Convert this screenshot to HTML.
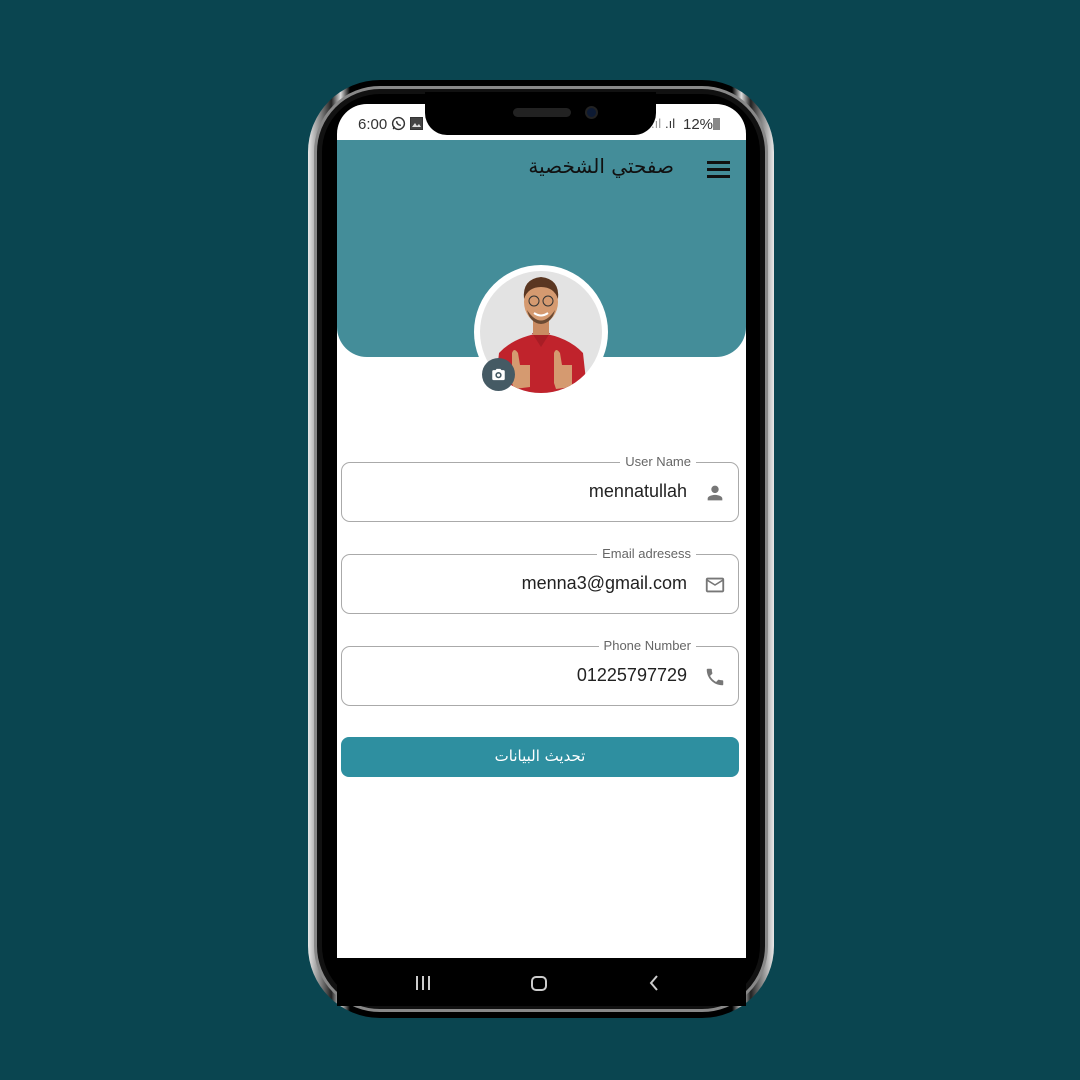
<!DOCTYPE html>
<html><head><meta charset="utf-8">
<style>
*{margin:0;padding:0;box-sizing:border-box}
body{width:1080px;height:1080px;background:#0a4550;position:relative;overflow:hidden;font-family:"Liberation Sans","Noto Sans CJK SC",sans-serif}
.frame{position:absolute;left:308px;top:80px;width:466px;height:938px;border-radius:72px;background:linear-gradient(90deg,#e8e8e8,#777 3%,#222 5%,#ddd 7%,#000 9%,#000 91%,#ddd 93%,#222 95%,#777 97%,#e8e8e8);}
.frame2{position:absolute;left:314px;top:86px;width:454px;height:926px;border-radius:66px;background:#111;border:3px solid #888}
.inner{position:absolute;left:322px;top:94px;width:438px;height:910px;border-radius:58px;background:#000}
.screen{position:absolute;left:337px;top:104px;width:409px;height:854px;background:#fff;border-radius:30px 30px 0 0;overflow:hidden}
.notch{position:absolute;left:425px;top:92px;width:231px;height:43px;background:#000;border-radius:0 0 22px 22px}
.spk{position:absolute;left:513px;top:108px;width:58px;height:9px;border-radius:5px;background:#222}
.cam{position:absolute;left:585px;top:106px;width:13px;height:13px;border-radius:50%;background:#0d1a33;border:2px solid #222}
.status{position:absolute;left:0;top:0;width:409px;height:36px;font-size:15px;color:#333}
.hdr{position:absolute;left:0;top:36px;width:409px;height:217px;background:#448d99;border-radius:0 0 30px 30px}
.title{position:absolute;right:72px;top:14px;font-size:20px;color:#111;font-family:"DejaVu Sans",sans-serif}
.menu{position:absolute;left:370px;top:21px;width:23px}
.menu i{display:block;height:3px;background:#111;margin-bottom:4px}
.field{position:absolute;left:4px;width:398px;height:60px;border:1.3px solid #aaa;border-radius:9px}
.lab{position:absolute;right:42px;top:-9px;background:#fff;padding:0 5px;font-size:13px;color:#666}
.val{position:absolute;right:51px;top:18px;font-size:18px;color:#222}
.ico{position:absolute;right:12px;top:19px;width:22px;height:22px}
.btn{position:absolute;left:4px;top:633px;width:398px;height:40px;border-radius:8px;background:#2e8fa0;color:#fff;text-align:center;line-height:38px;font-size:15px;font-family:"DejaVu Sans",sans-serif}
.nav{position:absolute;left:337px;top:958px;width:409px;height:48px;background:#000}
</style></head><body>
<div class="frame"></div><div class="frame2"></div><div class="inner"></div>
<div class="screen">
 <div class="status">
  <span style="position:absolute;left:21px;top:12px">6:00</span>
  <svg style="position:absolute;left:54px;top:12px" width="15" height="15" viewBox="0 0 16 16"><circle cx="8" cy="8" r="6.3" fill="none" stroke="#333" stroke-width="1.5"/><path d="M2.5 14l1-3" stroke="#333" stroke-width="1.5"/><path d="M6 5.5c0 2.5 2 4.5 4.5 4.5" stroke="#333" stroke-width="1.6" fill="none"/></svg>
  <svg style="position:absolute;left:73px;top:13px" width="13" height="13" viewBox="0 0 13 13"><rect x="0.5" y="0.5" width="12" height="12" fill="none" stroke="#333"/><rect x="1" y="1" width="11" height="11" fill="#444"/><path d="M2 10l3-4 2 3 2-2 2 3z" fill="#ddd"/></svg>
  <span style="position:absolute;left:314px;top:12px;font-size:13px;color:#999">.ıl</span>
  <span style="position:absolute;left:328px;top:12px;font-size:13px;color:#333">.ıl</span>
  <span style="position:absolute;left:346px;top:12px">12%</span>
  <span style="position:absolute;left:376px;top:14px;width:7px;height:12px;background:#888"></span>
 </div>
 <div class="hdr">
  <div class="title">صفحتي الشخصية</div>
  <div class="menu"><i></i><i></i><i></i></div>
 </div>
 <svg style="position:absolute;left:137px;top:161px" width="134" height="134" viewBox="0 0 134 134">
  <defs><clipPath id="c"><circle cx="67" cy="67" r="61"/></clipPath></defs>
  <circle cx="67" cy="67" r="67" fill="#fff"/>
  <circle cx="67" cy="67" r="61" fill="#e3e3e3"/>
  <g clip-path="url(#c)">
   <path d="M20 134 L25 88 Q40 72 67 68 Q94 72 109 88 L114 134Z" fill="#c0232c"/>
   <path d="M58 68 L67 82 L76 68Z" fill="#a81d25"/>
   <rect x="59" y="52" width="16" height="18" fill="#c98b62"/>
   <ellipse cx="67" cy="37" rx="17" ry="21" fill="#d59a70"/>
   <path d="M50 34 Q48 14 67 12 Q86 14 84 34 Q80 22 67 22 Q54 22 50 34Z" fill="#5a3621"/>
   <path d="M53 45 Q67 66 81 45 Q78 58 67 59 Q56 58 53 45Z" fill="#6b4a33"/>
   <circle cx="60" cy="36" r="5" fill="none" stroke="#333" stroke-width="1"/>
   <circle cx="74" cy="36" r="5" fill="none" stroke="#333" stroke-width="1"/>
   <path d="M60 48 Q67 53 74 48" stroke="#fff" stroke-width="2" fill="none"/>
   <path d="M38 118 L38 88 Q40 82 44 88 L46 100 L56 100 L56 122 L40 124Z" fill="#d59a70"/>
   <path d="M80 118 L80 88 Q82 82 86 88 L88 100 L98 100 L98 122 L82 124Z" fill="#d59a70"/>
  </g>
 </svg>
 <div style="position:absolute;left:145px;top:254px;width:33px;height:33px;border-radius:50%;background:#455a64"></div>
 <svg style="position:absolute;left:154px;top:263px" width="15" height="15" viewBox="0 0 24 24"><path fill="#fff" d="M9 3L7.2 5H4c-1.1 0-2 .9-2 2v12c0 1.1.9 2 2 2h16c1.1 0 2-.9 2-2V7c0-1.1-.9-2-2-2h-3.2L15 3H9zm3 15a5 5 0 110-10 5 5 0 010 10zm0-2.5a2.5 2.5 0 100-5 2.5 2.5 0 000 5z"/></svg>

 <div class="field" style="top:358px"><span class="lab">User Name</span><span class="val">mennatullah</span>
  <svg class="ico" viewBox="0 0 24 24"><path fill="#777" d="M12 12c2.2 0 4-1.8 4-4s-1.8-4-4-4-4 1.8-4 4 1.8 4 4 4zm0 2c-2.7 0-8 1.3-8 4v2h16v-2c0-2.7-5.3-4-8-4z"/></svg></div>
 <div class="field" style="top:450px"><span class="lab">Email adresess</span><span class="val">menna3@gmail.com</span>
  <svg class="ico" viewBox="0 0 24 24"><path fill="#777" d="M20 4H4c-1.1 0-2 .9-2 2v12c0 1.1.9 2 2 2h16c1.1 0 2-.9 2-2V6c0-1.1-.9-2-2-2zm0 14H4V8l8 5 8-5v10zm-8-7L4 6h16l-8 5z"/></svg></div>
 <div class="field" style="top:542px"><span class="lab">Phone Number</span><span class="val">01225797729</span>
  <svg class="ico" viewBox="0 0 24 24"><path fill="#777" d="M6.6 10.8c1.4 2.8 3.8 5.1 6.6 6.6l2.2-2.2c.3-.3.7-.4 1-.2 1.1.4 2.3.6 3.6.6.6 0 1 .4 1 1V20c0 .6-.4 1-1 1C10.6 21 3 13.4 3 4c0-.6.4-1 1-1h3.5c.6 0 1 .4 1 1 0 1.3.2 2.5.6 3.6.1.3 0 .7-.2 1L6.6 10.8z"/></svg></div>
 <div class="btn">تحديث البيانات</div>
</div>
<div class="notch"></div><div class="spk"></div><div class="cam"></div>
<div class="nav">
 <svg style="position:absolute;left:78px;top:18px" width="16" height="14"><rect x="1" y="0" width="2" height="14" fill="#ccc"/><rect x="7" y="0" width="2" height="14" fill="#ccc"/><rect x="13" y="0" width="2" height="14" fill="#ccc"/></svg>
 <div style="position:absolute;left:194px;top:18px;width:16px;height:15px;border:2px solid #ccc;border-radius:5px"></div>
 <svg style="position:absolute;left:312px;top:17px" width="10" height="16"><path d="M8 1L2 8l6 7" stroke="#ccc" stroke-width="2" fill="none"/></svg>
</div>
</body></html>
